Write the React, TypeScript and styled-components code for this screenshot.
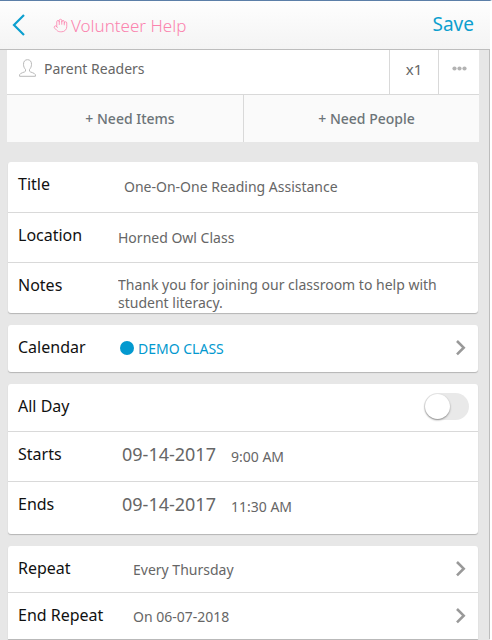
import React, { useState } from "react";
import styled, { createGlobalStyle } from "styled-components";
import { Hand } from "lucide-react";

const Global = createGlobalStyle`
  *, *::before, *::after { box-sizing: border-box; }
  body { margin: 0; background: #fff; overflow-x: hidden; }
  body, input, textarea, button { font-family: "Noto Sans", sans-serif; }
  button { border: 0; background: none; padding: 0; cursor: pointer; }
`;

const Panel = styled.div`
  border-top: 1px solid #5c7fa8;
  border-right: 2px solid #fff;
  min-height: 100vh;
  background: #e7e7e7;
`;

const Header = styled.header`
  display: flex;
  align-items: center;
  height: 49px;
  padding: 0 16px 0 12px;
  border-bottom: 1px solid #bdbdbd;
  background: linear-gradient(#fefefe, #f4f4f4);
`;

const BackButton = styled.button`
  display: flex;
  width: 41px;
`;

const Heading = styled.h1`
  display: flex;
  flex: 1;
  align-items: center;
  gap: 3px;
  margin: 0;
  font-size: 17px;
  font-weight: 300;
  color: #fb83ae;
`;

const SaveButton = styled.button`
  font-size: 19px;
  line-height: 24px;
  padding-bottom: 2px;
  color: #0c9fcf;
`;

const Content = styled.main`
  padding-right: 10px;
  border-right: 1px solid #bdbdbd;
`;

const Needs = styled.section`
  margin: 0 0 20px 7px;
  background: #fff;
`;

const NeedRow = styled.div`
  display: flex;
  height: 44px;
`;

const NeedName = styled.div`
  display: flex;
  flex: 1;
  align-items: center;
  gap: 8px;
  padding: 0 0 8px 12px;
  font-size: 14px;
  color: #666;
`;

const NeedCell = styled.button<{ $width: number }>`
  display: flex;
  align-items: center;
  justify-content: center;
  width: ${(p) => p.$width}px;
  padding-bottom: 7px;
  border-left: 1px solid #d9d9d9;
  font-size: 15px;
  color: #666;
`;

const NeedActions = styled.div`
  display: grid;
  grid-template-columns: 1fr 1fr;
  height: 48px;
  border-top: 1px solid #d9d9d9;
  background: #fafafa;
`;

const AddButton = styled.button`
  padding-left: 10px;
  font-size: 14px;
  font-weight: 500;
  color: #6c7478;
  & + & { border-left: 1px solid #d9d9d9; }
`;

const Card = styled.section<{ $continues?: boolean }>`
  margin: 0 1px 12px 8px;
  border-radius: ${(p) => (p.$continues ? "3px 3px 0 0" : "3px")};
  background: #fff;
  box-shadow: 0 1px 1px #b4b4b4;
`;

const Row = styled.div<{ $height: number }>`
  display: flex;
  min-height: ${(p) => p.$height}px;
  padding: 0 9px 0 10px;
  & + & { border-top: 1px solid #d9d9d9; }
`;

const Label = styled.label<{ $width?: number }>`
  flex: none;
  width: ${(p) => p.$width ?? 100}px;
  padding-top: 10px;
  font-size: 16px;
  line-height: 24px;
  color: #111;
`;

const Field = styled.input<{ $indent?: number }>`
  flex: 1;
  min-width: 0;
  height: 24px;
  margin: 12px 0 0;
  padding: 0 0 0 ${(p) => p.$indent ?? 0}px;
  border: 0;
  background: none;
  font-size: 14px;
  color: #666;
`;

const DateField = styled(Field)`
  flex: none;
  width: 109px;
  font-size: 18px;
  margin-top: 10px;
`;

const Notes = styled.textarea`
  flex: 1;
  min-width: 0;
  height: 37px;
  margin: 13px 0 0;
  padding: 0;
  border: 0;
  resize: none;
  overflow: hidden;
  background: none;
  font-size: 14px;
  line-height: 18px;
  color: #666;
`;

const Picker = styled.button<{ $indent?: number; $accent?: boolean }>`
  display: flex;
  flex: 1;
  align-items: center;
  height: 24px;
  margin-top: 11px;
  padding-left: ${(p) => p.$indent ?? 0}px;
  font-size: 14px;
  color: ${(p) => (p.$accent ? "#0399cf" : "#666")};
`;

const Dot = styled.span`
  width: 14px;
  height: 14px;
  margin-right: 4px;
  border-radius: 50%;
  background: #0399cf;
`;

const PickerText = styled.span`
  flex: 1;
  text-align: left;
`;

const Switch = styled.input`
  appearance: none;
  width: 45px;
  height: 27px;
  margin: 9px 0 0 auto;
  border-radius: 14px;
  background: #e9e9e9;
  cursor: pointer;
  &::before {
    content: "";
    display: block;
    width: 25px;
    height: 25px;
    margin: 1px;
    border-radius: 50%;
    background: #fff;
    box-shadow: 0 1px 2px #888;
  }
  &:checked { background: #0c9fcf; }
  &:checked::before { margin-left: 19px; }
`;

const BackIcon = () => (
  <svg width="14" height="22" viewBox="0 0 14 22" fill="none" stroke="#0c9fcf" strokeWidth="2.200" aria-hidden="true">
    <path d="M12 1 2 11l10 10" />
  </svg>
);

const PersonIcon = () => (
  <svg width="17" height="18" viewBox="0 0 17 18" fill="none" stroke="#b9b9b9" strokeWidth="1" strokeLinejoin="round" aria-hidden="true">
    <path d="M6.500 10.500C5.300 9.200 4.500 7.500 4.500 5.300 4.500 2.300 6 .7 8.500.7s4 1.600 4 4.600c0 2.200-.8 3.900-2 5.200v1.700c.2 1 5.400 1.600 5.900 3.500v1.600H.6v-1.600c.5-1.900 5.700-2.500 5.900-3.500z" />
  </svg>
);

const DotsIcon = () => (
  <svg width="15" height="5" viewBox="0 0 15 5" fill="#b3b3b3" aria-hidden="true">
    <circle cx="2.500" cy="2.500" r="2.100" />
    <circle cx="7.500" cy="2.500" r="2.100" />
    <circle cx="12.500" cy="2.500" r="2.100" />
  </svg>
);

const ChevronIcon = () => (
  <svg width="14" height="16" viewBox="0 0 14 16" fill="none" stroke="#999" strokeWidth="2.600" aria-hidden="true">
    <path d="m2 1 6.700 6.700L2 14.400" />
  </svg>
);

export default function App() {
  const [allDay, setAllDay] = useState(false);
  return (
    <>
      <Global />
      <Panel>
        <Header>
          <BackButton aria-label="Back"><BackIcon /></BackButton>
          <Heading><Hand size={15} strokeWidth={1.3} aria-hidden="true" />Volunteer Help</Heading>
          <SaveButton>Save</SaveButton>
        </Header>
        <Content>
          <Needs>
            <NeedRow>
              <NeedName><PersonIcon />Parent Readers</NeedName>
              <NeedCell $width={49}>x1</NeedCell>
              <NeedCell $width={41} aria-label="More"><DotsIcon /></NeedCell>
            </NeedRow>
            <NeedActions>
              <AddButton>+ Need Items</AddButton>
              <AddButton>+ Need People</AddButton>
            </NeedActions>
          </Needs>
          <Card>
            <Row $height={50}>
              <Label htmlFor="title">Title</Label>
              <Field id="title" $indent={6} defaultValue="One-On-One Reading Assistance" />
            </Row>
            <Row $height={50}>
              <Label htmlFor="location">Location</Label>
              <Field id="location" defaultValue="Horned Owl Class" />
            </Row>
            <Row $height={51}>
              <Label htmlFor="notes">Notes</Label>
              <Notes id="notes" defaultValue="Thank you for joining our classroom to help with student literacy." />
            </Row>
          </Card>
          <Card>
            <Row $height={47}>
              <Label htmlFor="calendar">Calendar</Label>
              <Picker id="calendar" $indent={2} $accent>
                <Dot /><PickerText>DEMO CLASS</PickerText><ChevronIcon />
              </Picker>
            </Row>
          </Card>
          <Card>
            <Row $height={47}>
              <Label htmlFor="allday">All Day</Label>
              <Switch id="allday" type="checkbox" role="switch" checked={allDay} onChange={(e) => setAllDay(e.target.checked)} />
            </Row>
            <Row $height={50}>
              <Label htmlFor="starts">Starts</Label>
              <DateField id="starts" $indent={4} defaultValue="09-14-2017" />
              <Field aria-label="Start time" $indent={4} defaultValue="9:00 AM" />
            </Row>
            <Row $height={53}>
              <Label htmlFor="ends">Ends</Label>
              <DateField id="ends" $indent={4} defaultValue="09-14-2017" />
              <Field aria-label="End time" $indent={4} defaultValue="11:30 AM" />
            </Row>
          </Card>
          <Card $continues>
            <Row $height={46}>
              <Label htmlFor="repeat" $width={115}>Repeat</Label>
              <Picker id="repeat"><PickerText>Every Thursday</PickerText><ChevronIcon /></Picker>
            </Row>
            <Row $height={47}>
              <Label htmlFor="endrepeat" $width={115}>End Repeat</Label>
              <Picker id="endrepeat"><PickerText>On 06-07-2018</PickerText><ChevronIcon /></Picker>
            </Row>
          </Card>
        </Content>
      </Panel>
    </>
  );
}
